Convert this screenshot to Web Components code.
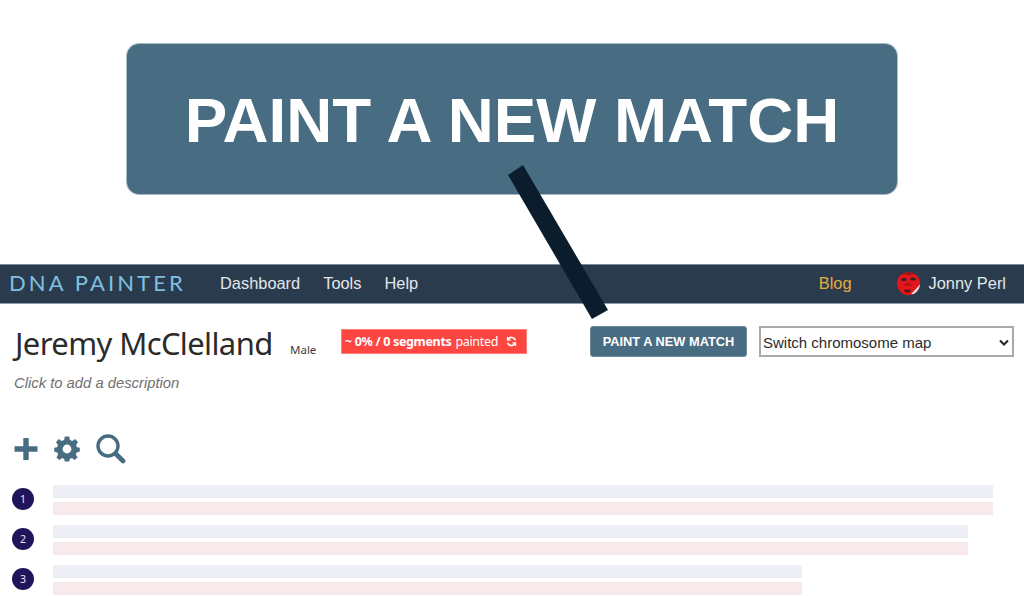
<!DOCTYPE html>
<html>
<head>
<meta charset="utf-8">
<title>DNA Painter</title>
<style>
  html, body { margin: 0; padding: 0; background: #fff; }
  body { width: 1024px; height: 596px; overflow: hidden; position: relative; font-family: "Liberation Sans", Arial, sans-serif; }
</style>
</head>
<body>
<dna-callout>PAINT A NEW MATCH</dna-callout>
<dna-nav></dna-nav>
<dna-header></dna-header>
<dna-tools></dna-tools>
<dna-chromosome num="1" top="940" bottom="940"></dna-chromosome>
<dna-chromosome num="2" top="915" bottom="915"></dna-chromosome>
<dna-chromosome num="3" top="749" bottom="749"></dna-chromosome>
<dna-arrow></dna-arrow>

<script>
class DnaCallout extends HTMLElement {
  constructor() {
    super();
    this.attachShadow({ mode: 'open' });
    this.shadowRoot.innerHTML = `
      <style>
        :host { display: flex; justify-content: center; height: 264px; padding-top: 43px; box-sizing: border-box; }
        .box {
          width: 772px; height: 152px; box-sizing: border-box;
          background: #486c82; border: 1px solid #a9bac5; border-radius: 13px;
          display: flex; justify-content: center; padding-top: 39px;
          color: #fff; font: bold 63.7px/73px "Liberation Sans", sans-serif;
          white-space: nowrap;
        }
      </style>
      <div class="box"><slot></slot></div>`;
  }
}

class DnaNav extends HTMLElement {
  constructor() {
    super();
    this.attachShadow({ mode: 'open' });
    this.shadowRoot.innerHTML = `
      <style>
        :host {
          display: flex; align-items: center; height: 40px; box-sizing: border-box;
          background: #2a3b4e; border-top: 1px solid #7f8a95; border-bottom: 1px solid #8e99a3;
          font: 16.4px "Liberation Sans", sans-serif; color: #e4e7ea; padding: 0 18px 1px 10px;
        }
        .logo { color: #7fc0e0; font: 400 22px "Lato", sans-serif; letter-spacing: 3.1px; width: 210px; white-space: nowrap; margin-left: -1px; margin-right: 1px; padding-bottom: 2px; }
        a { margin-right: 23px; }
        .spacer { flex: 1; }
        .blog { color: #e5ae3a; margin-right: 45px; }
        .avatar { width: 23px; height: 23px; margin-right: 9px; display: block; }
        .user { margin: 0; }
      </style>
      <span class="logo">DNA PAINTER</span>
      <a>Dashboard</a><a>Tools</a><a>Help</a>
      <span class="spacer"></span>
      <a class="blog">Blog</a>
      <svg class="avatar" viewBox="0 0 23 23">
        <defs><clipPath id="c"><circle cx="11.5" cy="11.5" r="11.5"/></clipPath></defs>
        <g clip-path="url(#c)">
          <rect width="23" height="23" fill="#e4161b"/>
          <path d="M0 0H23V4C18 1.5 14 2 11.5 3.5C9 2 5 1.5 0 5Z" fill="#8c1a1d"/>
          <ellipse cx="7" cy="7.5" rx="2.8" ry="1.5" fill="#2b2326"/>
          <ellipse cx="16" cy="7" rx="2.8" ry="1.5" fill="#2b2326"/>
          <path d="M8 11H14L15 14H7Z" fill="#b81216"/>
          <path d="M7 17.5H14L13 20.5H8Z" fill="#5a1416"/>
          <path d="M23 12.5L17 19L14 22L23 23Z" fill="#eee6e2"/>
          <path d="M0 17L5 23H0Z" fill="#a81418"/>
        </g>
      </svg>
      <a class="user">Jonny Perl</a>`;
  }
}

class DnaHeader extends HTMLElement {
  constructor() {
    super();
    this.attachShadow({ mode: 'open' });
    this.shadowRoot.innerHTML = `
      <style>
        :host { display: block; height: 115px; box-sizing: border-box; padding: 22px 10px 0 15px; }
        .top { display: flex; align-items: flex-start; }
        h1 { margin: -1px 0 1px; font: 400 31px/37px "Noto Sans", sans-serif; letter-spacing: -0.62px; color: #2b2b2b; white-space: nowrap; width: 275px; }
        .sex { font: 11.5px/16px "Noto Sans", sans-serif; color: #3d3d3d; width: 51px; margin-top: 16px; }
        .painted {
          width: 186px; height: 25px; box-sizing: border-box; margin-top: 3px;
          background: #fd4640; border: 1px solid #ff7f7a; color: #fff;
          font: 12.5px/22px "Noto Sans", sans-serif; letter-spacing: -0.33px; padding-left: 3px;
          display: flex; align-items: center; white-space: nowrap;
        }
        .painted b { font-weight: 700; margin: 0 4px 0 0; }
        .painted svg { margin-left: 8px; }
        .btn {
          margin-left: 63px; width: 157px; height: 31px; box-sizing: border-box;
          background: #486c82; border-radius: 3px; border: 1px solid #6c8a9c; color: #fff;
          font: bold 12.8px/30px "Liberation Sans", sans-serif; text-align: center; white-space: nowrap;
        }
        .select {
          margin-left: 12px; width: 255px; height: 31px; box-sizing: border-box;
          border: 2px solid #a9a9a9; background: #fff; color: #2b2b2b;
          font: 15px/27px "Liberation Sans", sans-serif; padding: 1px 3px 0 2px;
          display: flex; align-items: center; justify-content: space-between;
        }
        .desc { margin: 11px 0 0 -1px; font: italic 14.8px/18px "Liberation Sans", sans-serif; color: #6f6f6f; }
      </style>
      <div class="top">
        <h1>Jeremy McClelland</h1>
        <span class="sex">Male</span>
        <span class="painted"><b>~ 0% / 0 segments</b>painted
          <svg width="11" height="11" viewBox="0 0 12 12" fill="none" stroke="#fff" stroke-width="1.8"><path d="M10.2 4.6A4.4 4.4 0 0 0 2.2 3.8"/><path d="M1.8 7.4A4.4 4.4 0 0 0 9.8 8.2"/><path d="M1.6 1V4.4H5" stroke-width="1.4"/><path d="M10.4 11V7.6H7" stroke-width="1.4"/></svg>
        </span>
        <span class="btn">PAINT A NEW MATCH</span>
        <span class="select">Switch chromosome map
          <svg width="10" height="7" viewBox="0 0 10 7" fill="none" stroke="#222" stroke-width="2"><path d="M1 1.5L5 5.5L9 1.5"/></svg>
        </span>
      </div>
      <div class="desc">Click to add a description</div>`;
  }
}

class DnaTools extends HTMLElement {
  constructor() {
    super();
    this.attachShadow({ mode: 'open' });
    this.shadowRoot.innerHTML = `
      <style>
        :host { display: flex; align-items: center; gap: 16px; height: 60px; box-sizing: border-box; padding-left: 14px; margin-bottom: 6px; }
        svg { display: block; fill: #486c82; }
      </style>
      <svg width="24" height="24" viewBox="0 0 24 24"><path d="M9.3 1H14.7V9.3H23.5V14.7H14.7V23H9.3V14.7H.5V9.3H9.3Z"/></svg>
      <svg width="26" height="26" viewBox="0 0 26 26"><path fill-rule="evenodd" d="M10.8 0.5H15.2L15.9 4A9.2 9.2 0 0 1 18.3 5L21.3 3L24 6.2L22 9A9.2 9.2 0 0 1 22.9 11.3L25.8 11.7V15.6L22.7 16.4A9.2 9.2 0 0 1 21.8 18.4L23.6 21.4L20.6 24L18 22A9.2 9.2 0 0 1 15.8 22.9L15.2 25.5H10.8L10.2 22.9A9.2 9.2 0 0 1 8 22L5.4 24L2.4 21.4L4.2 18.4A9.2 9.2 0 0 1 3.3 16.4L.2 15.6V11.7L3.1 11.3A9.2 9.2 0 0 1 4 9L2 6.2L4.7 3L7.7 5A9.2 9.2 0 0 1 10.1 4ZM13 8.6A4.4 4.4 0 1 0 13 17.4A4.4 4.4 0 1 0 13 8.6Z"/></svg>
      <svg width="30" height="30" viewBox="0 0 30 30"><circle cx="12" cy="12" r="10" fill="none" stroke="#486c82" stroke-width="3.4"/><path d="M20 20L27 27" stroke="#486c82" stroke-width="4.6" stroke-linecap="round" fill="none"/></svg>`;
  }
}

class DnaChromosome extends HTMLElement {
  constructor() {
    super();
    this.attachShadow({ mode: 'open' });
    const n = this.getAttribute('num');
    const top = this.getAttribute('top');
    const bottom = this.getAttribute('bottom');
    this.shadowRoot.innerHTML = `
      <style>
        :host { display: flex; align-items: center; height: 30px; margin-bottom: 10px; padding-left: 12px; }
        .num {
          width: 22px; height: 22px; border-radius: 50%; background: #21145a; color: #e8e6f2;
          font: 10.5px/22px "Noto Sans", sans-serif; text-align: center; margin: 0 19px 2px 0; flex: none;
        }
        .bars { display: flex; flex-direction: column; gap: 4px; }
        .bar { height: 13px; }
        .a { background: #eeeff4; }
        .b { background: #f8e9ec; }
      </style>
      <span class="num">${n}</span>
      <div class="bars">
        <div class="bar a" style="width:${top}px"></div>
        <div class="bar b" style="width:${bottom}px"></div>
      </div>`;
  }
}

class DnaArrow extends HTMLElement {
  constructor() {
    super();
    this.attachShadow({ mode: 'open' });
    this.shadowRoot.innerHTML = `
      <style>
        :host { position: absolute; left: 0; top: 0; display: block; width: 1024px; height: 596px; pointer-events: none; }
        svg { display: block; }
      </style>
      <svg width="1024" height="596"><polygon points="508,175 523,165 608,310 592,319" fill="#0b1c2d"/></svg>`;
  }
}

customElements.define('dna-callout', DnaCallout);
customElements.define('dna-nav', DnaNav);
customElements.define('dna-header', DnaHeader);
customElements.define('dna-tools', DnaTools);
customElements.define('dna-chromosome', DnaChromosome);
customElements.define('dna-arrow', DnaArrow);
</script>
</body>
</html>
